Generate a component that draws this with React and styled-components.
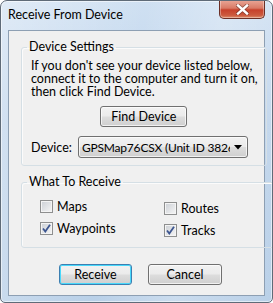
import React from "react";
import styled, { createGlobalStyle } from "styled-components";

const GlobalStyle = createGlobalStyle`
  html, body {
    margin: 0;
    padding: 0;
    background: #ffffff;
  }
  body {
    font-family: Lato, "Noto Sans", sans-serif;
    font-size: 12.5px;
    color: #000;
  }
`;

const CloseIcon = () => (
  <svg width="13" height="11" viewBox="0 0 13 11">
    <path
      d="M2 1.5 L11 9.5 M11 1.5 L2 9.5"
      stroke="#5a2a22"
      strokeWidth="4"
      strokeLinecap="square"
      opacity="0.55"
    />
    <path
      d="M2 1.5 L11 9.5 M11 1.5 L2 9.5"
      stroke="#ffffff"
      strokeWidth="2.4"
      strokeLinecap="square"
    />
  </svg>
);

const CheckMark = () => (
  <svg width="9" height="9" viewBox="0 0 9 9">
    <path
      d="M1 4.5 L3.3 7.5 L8 0.8"
      fill="none"
      stroke="#3d5690"
      strokeWidth="1.8"
    />
  </svg>
);

const Arrow = () => (
  <svg width="8" height="5" viewBox="0 0 8 5">
    <path d="M0 0 H8 L4 4.5 Z" fill="#000" />
  </svg>
);

const Checkbox = ({ checked, label }) => (
  <CheckRow>
    <Box>{checked && <CheckMark />}</Box>
    <span>{label}</span>
  </CheckRow>
);

export default function App() {
  return (
    <>
      <GlobalStyle />
      <Window>
        <TitleBar>
          <Title>Receive From Device</Title>
          <CloseButton>
            <CloseIcon />
          </CloseButton>
        </TitleBar>
        <Client>
          <Group>
            <Legend>Device Settings</Legend>
            <GroupBody>
              <Hint>
                If you don't see your device listed below,
                <br />
                connect it to the computer and turn it on,
                <br />
                then click Find Device.
              </Hint>
              <Centered>
                <Button $width={87}>Find Device</Button>
              </Centered>
              <DeviceRow>
                <span>Device:</span>
                <Combo>
                  <ComboText>GPSMap76CSX (Unit ID 3826320000)</ComboText>
                  <ComboArrow>
                    <Arrow />
                  </ComboArrow>
                </Combo>
              </DeviceRow>
            </GroupBody>
          </Group>
          <Group>
            <Legend>What To Receive</Legend>
            <Options>
              <OptionColumn>
                <Checkbox label="Maps" />
                <Checkbox label="Waypoints" checked />
              </OptionColumn>
              <OptionColumn $offset={2}>
                <Checkbox label="Routes" />
                <Checkbox label="Tracks" checked />
              </OptionColumn>
            </Options>
          </Group>
          <Footer>
            <Button $width={73} $default>
              Receive
            </Button>
            <Button $width={74}>Cancel</Button>
          </Footer>
        </Client>
      </Window>
    </>
  );
}

const Window = styled.div`
  width: 273px;
  height: 303px;
  box-sizing: border-box;
  border: 1px solid #5f6b78;
  border-radius: 7px 7px 5px 5px;
  background: linear-gradient(
      100deg,
      rgba(255, 255, 255, 0.35) 0%,
      rgba(255, 255, 255, 0) 45%,
      rgba(255, 255, 255, 0.25) 70%,
      rgba(255, 255, 255, 0) 100%
    ),
    linear-gradient(180deg, #cfe0f2 0%, #bfd4eb 40%, #b9d0e8 100%);
  box-shadow: inset 0 0 0 1px rgba(255, 255, 255, 0.55);
  padding: 0 7px 6px 7px;
  display: flex;
  flex-direction: column;
  overflow: hidden;
`;

const TitleBar = styled.div`
  height: 29px;
  display: flex;
  justify-content: space-between;
  align-items: flex-start;
`;

const Title = styled.div`
  line-height: 16px;
  margin-top: 6px;
  white-space: nowrap;
`;

const CloseButton = styled.div`
  width: 46px;
  height: 19px;
  margin-top: -1px;
  box-sizing: border-box;
  border: 1px solid #6b2f26;
  border-top: none;
  border-radius: 0 0 5px 5px;
  background: linear-gradient(
    180deg,
    #eaa898 0%,
    #d97a66 45%,
    #c7412b 55%,
    #cc5a3e 85%,
    #de8e6c 100%
  );
  box-shadow: inset 0 0 0 1px rgba(255, 255, 255, 0.35);
  display: flex;
  align-items: center;
  justify-content: center;
  padding-top: 1px;
`;

const Client = styled.div`
  flex: 1;
  background: #f0f0f0;
  border: 1px solid #8d9fb3;
  padding: 8px 11px 10px 12px;
  display: flex;
  flex-direction: column;
  gap: 8px;
`;

const Group = styled.fieldset`
  margin: 0;
  padding: 0;
  border: 1px solid #d5dfe5;
  border-radius: 3px;
  box-shadow: inset 1px 1px 0 #fbfbfb;
`;

const Legend = styled.legend`
  margin-left: 5px;
  padding: 0 2px;
  line-height: 16px;
`;

const GroupBody = styled.div`
  padding: 4px 8px 7px 9px;
  display: flex;
  flex-direction: column;
`;

const Hint = styled.p`
  margin: 0;
  line-height: 13px;
  white-space: nowrap;
`;

const Centered = styled.div`
  display: flex;
  justify-content: center;
  margin-top: 8px;
  padding-right: 1px;
`;

const Button = styled.div`
  width: ${(p) => p.$width}px;
  height: 21px;
  box-sizing: border-box;
  border: 1px solid ${(p) => (p.$default ? "#3c7fb1" : "#707070")};
  border-radius: 3px;
  background: linear-gradient(
    180deg,
    #f2f2f2 0%,
    #ebebeb 48%,
    #dddddd 52%,
    #cfcfcf 100%
  );
  box-shadow: inset 0 0 0 1px
    ${(p) => (p.$default ? "#48d8fb" : "rgba(255,255,255,0.7)")};
  display: flex;
  align-items: center;
  justify-content: center;
  line-height: 16px;
`;

const DeviceRow = styled.div`
  display: flex;
  align-items: center;
  gap: 6px;
  margin-top: 9px;
`;

const Combo = styled.div`
  width: 170px;
  height: 22px;
  box-sizing: border-box;
  border: 1px solid #707070;
  border-radius: 3px;
  background: linear-gradient(
    180deg,
    #f2f2f2 0%,
    #ebebeb 48%,
    #dddddd 52%,
    #cfcfcf 100%
  );
  box-shadow: inset 0 0 0 1px rgba(255, 255, 255, 0.7);
  display: flex;
  align-items: center;
  padding-left: 3px;
`;

const ComboText = styled.div`
  flex: 1;
  overflow: hidden;
  white-space: nowrap;
  font-size: 12px;
  letter-spacing: -0.2px;
`;

const ComboArrow = styled.div`
  width: 17px;
  display: flex;
  justify-content: center;
  padding-top: 1px;
`;

const Options = styled.div`
  display: flex;
  padding: 10px 0 10px 18px;
`;

const OptionColumn = styled.div`
  width: 124px;
  display: flex;
  flex-direction: column;
  gap: 9px;
  margin-top: ${(p) => p.$offset || 0}px;
`;

const CheckRow = styled.div`
  display: flex;
  align-items: center;
  gap: 4px;
  height: 13px;
`;

const Box = styled.div`
  width: 13px;
  height: 13px;
  box-sizing: border-box;
  border: 1px solid #8e8f8f;
  background: linear-gradient(135deg, #cbcfd5 0%, #f6f6f6 100%);
  box-shadow: inset 0 0 0 1px #f4f4f4;
  display: flex;
  align-items: center;
  justify-content: center;
`;

const Footer = styled.div`
  margin-top: 8px;
  display: flex;
  justify-content: center;
  gap: 16px;
  padding-left: 7px;
`;
